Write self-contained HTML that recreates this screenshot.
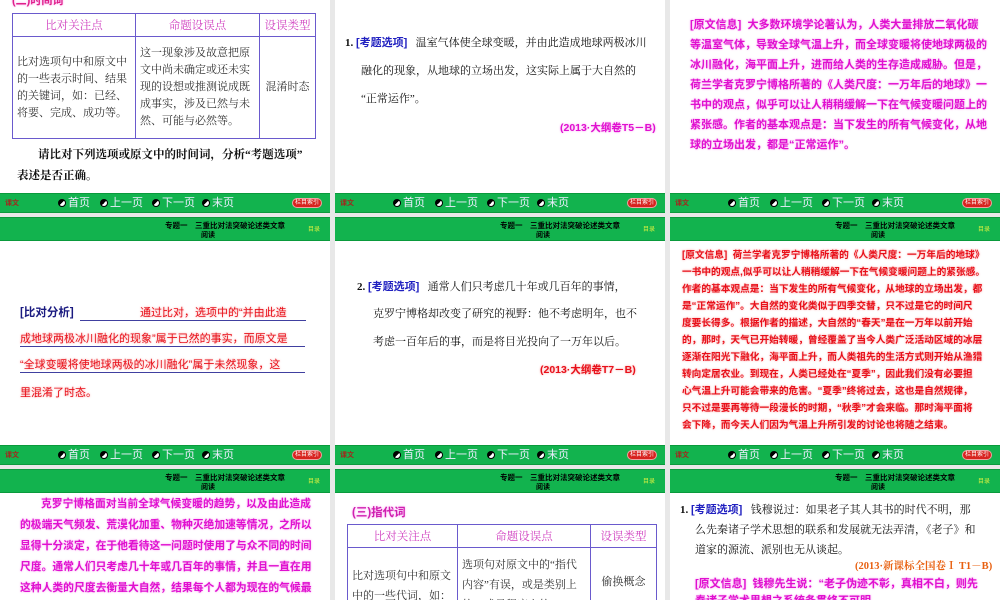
<!DOCTYPE html>
<html><head><meta charset="utf-8"><style>
*{margin:0;padding:0;box-sizing:border-box}
html,body{width:1000px;height:600px;overflow:hidden}
body{background:#e8e8e8;position:relative;font-family:"Liberation Serif","Noto Serif CJK SC","Noto Sans CJK SC",serif}
.s{position:absolute;background:#fff;overflow:hidden}
.t{position:absolute;white-space:nowrap;line-height:16px}
.nav{position:absolute;height:20px;background:#12b34e;border-top:1px solid #0a9a3c;border-bottom:1px solid #0a9a3c;width:330px;font-family:"Liberation Sans","Noto Sans CJK SC",sans-serif;overflow:hidden}
.nav span{position:absolute;top:2px;font-size:11px;color:#eef;line-height:14px}
.nav .k{left:5px;color:#a0281e;font-size:7px;font-weight:bold;top:3px}
.nav .ic{display:inline-block;width:8px;height:8px;border-radius:50%;background:linear-gradient(135deg,#000 50%,#fff 50%);border:1px solid #000;margin-right:2px;vertical-align:-1px}
.nav .pill{left:292px;top:4px;width:30px;height:10px;border-radius:5px;background:#d8231f;border:1px solid #f0a0a0;font-size:6px;text-align:center;line-height:8px;color:#fff}
.hd{position:absolute;height:24px;background:#12b34e;border-top:1px solid #0a9a3c;border-bottom:1px solid #0a9a3c;width:330px;font-family:"Liberation Sans","Noto Sans CJK SC",sans-serif;overflow:hidden}
.hd .a{position:absolute;left:165px;top:2px;font-size:7.5px;font-weight:bold;color:#000;line-height:11px;white-space:nowrap}
.hd .b{position:absolute;left:201px;top:12px;font-size:7px;font-weight:bold;color:#000}
.hd .c{position:absolute;left:308px;top:6px;font-size:6px;color:#d8f040}
.mag{color:#e010d0;font-weight:bold;text-shadow:0 0 2px #f8a0f0;font-family:"Liberation Sans","Noto Sans CJK SC",sans-serif}
.red{color:#e8101a;font-weight:bold;text-shadow:0 0 2px #f8a0a0;font-family:"Liberation Sans","Noto Sans CJK SC",sans-serif}
.blk{color:#111;font-size:11px}
.blue{color:#2020c0;font-weight:bold;font-family:"Liberation Sans","Noto Sans CJK SC",sans-serif}
table{position:absolute;border-collapse:collapse;font-size:11px;color:#333;table-layout:fixed}
td{border:1px solid #6a5acd;vertical-align:middle;padding:0 4px;line-height:17px}
th{border:1px solid #6a5acd;color:#d040c0;font-weight:normal;height:23px;font-size:11.5px}
.m3 div{position:absolute;white-space:nowrap}
</style></head><body>

<!-- Row1 col1 -->
<div class="s" style="left:0;top:0;width:330px;height:193px">
<div class="t mag" style="left:12px;top:-7px;font-size:11px;color:#e0208a">(二)时间词</div>
<table style="left:12px;top:13px;width:304px;height:126px">
<tr><th style="width:123px">比对关注点</th><th style="width:124px">命题设误点</th><th>设误类型</th></tr>
<tr><td style="height:102px">比对选项句中和原文中的一些表示时间、结果的关键词，如：已经、将要、完成、成功等。</td><td>这一现象涉及故意把原文中尚未确定或还未实现的设想或推测说成既成事实，涉及已然与未然、可能与必然等。</td><td style="text-align:center">混淆时态</td></tr>
</table>
<div class="t" style="left:38px;top:147px;font-size:11.5px;font-weight:bold;color:#111">请比对下列选项或原文中的时间词，分析“考题选项”</div>
<div class="t" style="left:17px;top:168px;font-size:11.5px;font-weight:bold;color:#111">表述是否正确。</div>
</div>

<!-- Row1 col2 -->
<div class="s" style="left:335px;top:0;width:330px;height:193px">
<div class="t blk" style="left:10px;top:35px"><b>1.</b> <span class="blue">[考题选项]</span>&nbsp;&nbsp; 温室气体使全球变暖，并由此造成地球两极冰川</div>
<div class="t blk" style="left:26px;top:63px">融化的现象，从地球的立场出发，这实际上属于大自然的</div>
<div class="t blk" style="left:26px;top:91px">“正常运作”。</div>
<div class="t mag" style="left:225px;top:120px;font-size:10.5px">(2013·大纲卷T5－B)</div>
</div>

<!-- Row1 col3 -->
<div class="s m3" style="left:670px;top:0;width:330px;height:193px">
<div class="mag" style="left:20px;top:16px;font-size:11px">[原文信息]&nbsp; 大多数环境学论著认为，人类大量排放二氧化碳</div>
<div class="mag" style="left:20px;top:36px;font-size:11px">等温室气体，导致全球气温上升，而全球变暖将使地球两极的</div>
<div class="mag" style="left:20px;top:56px;font-size:11px">冰川融化，海平面上升，进而给人类的生存造成威胁。但是，</div>
<div class="mag" style="left:20px;top:76px;font-size:11px">荷兰学者克罗宁博格所著的《人类尺度：一万年后的地球》一</div>
<div class="mag" style="left:20px;top:96px;font-size:11px">书中的观点，似乎可以让人稍稍缓解一下在气候变暖问题上的</div>
<div class="mag" style="left:20px;top:116px;font-size:11px">紧张感。作者的基本观点是：当下发生的所有气候变化，从地</div>
<div class="mag" style="left:20px;top:136px;font-size:11px">球的立场出发，都是“正常运作”。</div>
</div>

<!-- nav row1 -->
<div class="nav" style="left:0;top:193px"><span class="k">课文</span><span style="left:58px"><i class="ic"></i>首页</span><span style="left:100px"><i class="ic"></i>上一页</span><span style="left:152px"><i class="ic"></i>下一页</span><span style="left:202px"><i class="ic"></i>末页</span><span class="pill">栏目索引</span></div>
<div class="nav" style="left:335px;top:193px"><span class="k">课文</span><span style="left:58px"><i class="ic"></i>首页</span><span style="left:100px"><i class="ic"></i>上一页</span><span style="left:152px"><i class="ic"></i>下一页</span><span style="left:202px"><i class="ic"></i>末页</span><span class="pill">栏目索引</span></div>
<div class="nav" style="left:670px;top:193px"><span class="k">课文</span><span style="left:58px"><i class="ic"></i>首页</span><span style="left:100px"><i class="ic"></i>上一页</span><span style="left:152px"><i class="ic"></i>下一页</span><span style="left:202px"><i class="ic"></i>末页</span><span class="pill">栏目索引</span></div>

<!-- header row2 -->
<div class="hd" style="left:0;top:217px"><span class="a">专题一　三重比对法突破论述类文章</span><span class="b">阅读</span><span class="c">目录</span></div>
<div class="hd" style="left:335px;top:217px"><span class="a">专题一　三重比对法突破论述类文章</span><span class="b">阅读</span><span class="c">目录</span></div>
<div class="hd" style="left:670px;top:217px"><span class="a">专题一　三重比对法突破论述类文章</span><span class="b">阅读</span><span class="c">目录</span></div>

<!-- Row2 col1 -->
<div class="s" style="left:0;top:241px;width:330px;height:204px">
<div class="t blue" style="left:20px;top:64px;font-size:11.5px;color:#1a1a80">[比对分析]</div>
<div style="position:absolute;left:80px;top:79px;width:226px;border-top:1px solid #4040a0"></div>
<div style="position:absolute;left:20px;top:105px;width:285px;border-top:1px solid #4040a0"></div>
<div style="position:absolute;left:20px;top:131px;width:285px;border-top:1px solid #4040a0"></div>
<div class="t red" style="left:140px;top:64px;font-size:11px;font-weight:normal">通过比对，选项中的“并由此造</div>
<div class="t red" style="left:20px;top:90px;font-size:11px;font-weight:normal">成地球两极冰川融化的现象”属于已然的事实，而原文是</div>
<div class="t red" style="left:20px;top:116px;font-size:11px;font-weight:normal">“全球变暖将使地球两极的冰川融化”属于未然现象，这</div>
<div class="t red" style="left:20px;top:144px;font-size:11px;font-weight:normal">里混淆了时态。</div>
</div>

<!-- Row2 col2 -->
<div class="s" style="left:335px;top:241px;width:330px;height:204px">
<div class="t blk" style="left:22px;top:38px"><b>2.</b> <span class="blue">[考题选项]</span>&nbsp;&nbsp; 通常人们只考虑几十年或几百年的事情，</div>
<div class="t blk" style="left:38px;top:65px">克罗宁博格却改变了研究的视野：他不考虑明年，也不</div>
<div class="t blk" style="left:38px;top:93px">考虑一百年后的事，而是将目光投向了一万年以后。</div>
<div class="t red" style="left:205px;top:121px;font-size:10.5px">(2013·大纲卷T7－B)</div>
</div>

<!-- Row2 col3 -->
<div class="s m3" style="left:670px;top:241px;width:330px;height:204px">
<div class="red" style="left:12px;top:6px;font-size:9.7px">[原文信息]&nbsp; 荷兰学者克罗宁博格所著的《人类尺度：一万年后的地球》</div>
<div class="red" style="left:12px;top:23px;font-size:9.7px">一书中的观点,似乎可以让人稍稍缓解一下在气候变暖问题上的紧张感。</div>
<div class="red" style="left:12px;top:40px;font-size:9.7px">作者的基本观点是：当下发生的所有气候变化，从地球的立场出发，都</div>
<div class="red" style="left:12px;top:57px;font-size:9.7px">是“正常运作”。大自然的变化类似于四季交替，只不过是它的时间尺</div>
<div class="red" style="left:12px;top:74px;font-size:9.7px">度要长得多。根据作者的描述，大自然的“春天”是在一万年以前开始</div>
<div class="red" style="left:12px;top:91px;font-size:9.7px">的，那时，天气已开始转暖，曾经覆盖了当今人类广泛活动区域的冰层</div>
<div class="red" style="left:12px;top:108px;font-size:9.7px">逐渐在阳光下融化，海平面上升，而人类祖先的生活方式则开始从渔猎</div>
<div class="red" style="left:12px;top:125px;font-size:9.7px">转向定居农业。到现在，人类已经处在“夏季”，因此我们没有必要担</div>
<div class="red" style="left:12px;top:142px;font-size:9.7px">心气温上升可能会带来的危害。“夏季”终将过去，这也是自然规律，</div>
<div class="red" style="left:12px;top:159px;font-size:9.7px">只不过是要再等待一段漫长的时期，“秋季”才会来临。那时海平面将</div>
<div class="red" style="left:12px;top:176px;font-size:9.7px">会下降，而今天人们因为气温上升所引发的讨论也将随之结束。</div>
</div>

<!-- nav row2 -->
<div class="nav" style="left:0;top:445px"><span class="k">课文</span><span style="left:58px"><i class="ic"></i>首页</span><span style="left:100px"><i class="ic"></i>上一页</span><span style="left:152px"><i class="ic"></i>下一页</span><span style="left:202px"><i class="ic"></i>末页</span><span class="pill">栏目索引</span></div>
<div class="nav" style="left:335px;top:445px"><span class="k">课文</span><span style="left:58px"><i class="ic"></i>首页</span><span style="left:100px"><i class="ic"></i>上一页</span><span style="left:152px"><i class="ic"></i>下一页</span><span style="left:202px"><i class="ic"></i>末页</span><span class="pill">栏目索引</span></div>
<div class="nav" style="left:670px;top:445px"><span class="k">课文</span><span style="left:58px"><i class="ic"></i>首页</span><span style="left:100px"><i class="ic"></i>上一页</span><span style="left:152px"><i class="ic"></i>下一页</span><span style="left:202px"><i class="ic"></i>末页</span><span class="pill">栏目索引</span></div>

<!-- header row3 -->
<div class="hd" style="left:0;top:469px"><span class="a">专题一　三重比对法突破论述类文章</span><span class="b">阅读</span><span class="c">目录</span></div>
<div class="hd" style="left:335px;top:469px"><span class="a">专题一　三重比对法突破论述类文章</span><span class="b">阅读</span><span class="c">目录</span></div>
<div class="hd" style="left:670px;top:469px"><span class="a">专题一　三重比对法突破论述类文章</span><span class="b">阅读</span><span class="c">目录</span></div>

<!-- Row3 col1 -->
<div class="s m3" style="left:0;top:493px;width:330px;height:107px">
<div class="mag" style="left:41px;top:2px;font-size:10.8px">克罗宁博格面对当前全球气候变暖的趋势，以及由此造成</div>
<div class="mag" style="left:20px;top:23px;font-size:10.8px">的极端天气频发、荒漠化加重、物种灭绝加速等情况，之所以</div>
<div class="mag" style="left:20px;top:44px;font-size:10.8px">显得十分淡定，在于他看待这一问题时使用了与众不同的时间</div>
<div class="mag" style="left:20px;top:65px;font-size:10.8px">尺度。通常人们只考虑几十年或几百年的事情，并且一直在用</div>
<div class="mag" style="left:20px;top:86px;font-size:10.8px">这种人类的尺度去衡量大自然，结果每个人都为现在的气候最</div>
</div>

<!-- Row3 col2 -->
<div class="s" style="left:335px;top:493px;width:330px;height:107px">
<div class="t mag" style="left:17px;top:12px;font-size:11.5px;color:#d020b0">(三)指代词</div>
<table style="left:12px;top:31px;width:310px">
<tr><th style="width:110px">比对关注点</th><th style="width:133px">命题设误点</th><th>设误类型</th></tr>
<tr><td style="padding-top:6px;line-height:20px;height:70px">比对选项句中和原文中的一些代词，如：</td><td style="padding-top:4px;line-height:20px">选项句对原文中的“指代内容”有误，或是类别上的，或是程度上的</td><td style="text-align:center">偷换概念</td></tr>
</table>
</div>

<!-- Row3 col3 -->
<div class="s" style="left:670px;top:493px;width:330px;height:107px">
<div class="t blk" style="left:10px;top:9px"><b>1.</b> <span class="blue">[考题选项]</span>&nbsp;&nbsp; 钱穆说过：如果老子其人其书的时代不明，那</div>
<div class="t blk" style="left:25px;top:29px">么先秦诸子学术思想的联系和发展就无法弄清，《老子》和</div>
<div class="t blk" style="left:25px;top:49px">道家的源流、派别也无从谈起。</div>
<div class="t" style="left:185px;top:66px;font-size:10.5px;font-weight:bold;color:#e86010">(2013·新课标全国卷Ⅰ T1－B)</div>
<div class="t mag" style="left:25px;top:83px;font-size:11px">[原文信息]&nbsp; 钱穆先生说：“老子伪迹不彰，真相不白，则先</div>
<div class="t mag" style="left:25px;top:100px;font-size:11px">秦诸子学术思想之系统条贯终不可明</div>
</div>

</body></html>
